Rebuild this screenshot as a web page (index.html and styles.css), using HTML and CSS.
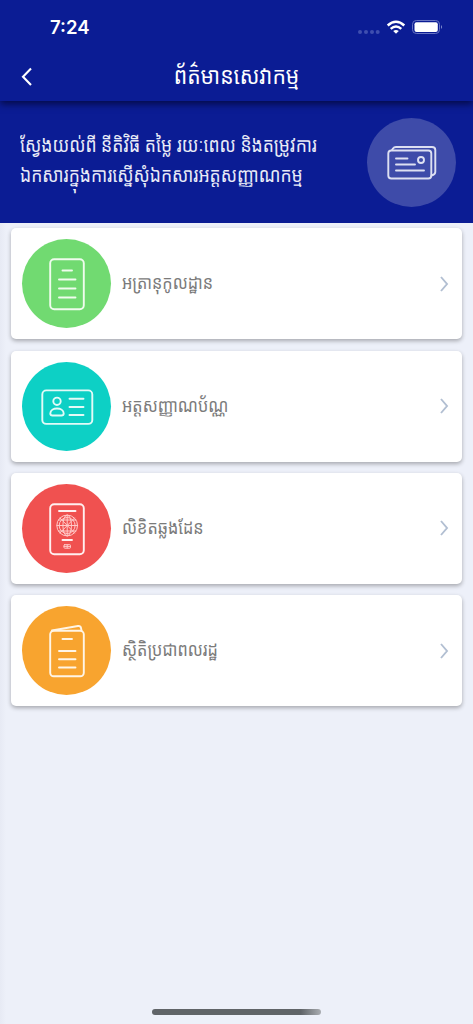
FILE: index.html
```html
<!DOCTYPE html>
<html lang="km">
<head>
<meta charset="utf-8">
<meta name="viewport" content="width=device-width, initial-scale=1">
<title>ព័ត៌មានសេវាកម្ម</title>
<link rel="stylesheet" href="styles.css">
</head>
<body>
<div class="screen">
  <header class="header">
    <div class="status">
      <span class="time">7:24</span>
      <svg class="status-icons" width="86" height="16" viewBox="0 0 86 16">
        <g fill="#3f4eaf"><circle cx="3" cy="12" r="2"/><circle cx="9" cy="12" r="2"/><circle cx="15" cy="12" r="2"/><circle cx="20.700" cy="12" r="2"/></g>
        <g fill="none" stroke="#fff" stroke-width="2.500"><path d="M30.700 5.500Q39 -2 47.300 5.500"/><path d="M33.700 8.900Q39 4.200 44.300 8.900"/></g>
        <path fill="#fff" d="M36.200 11Q39 8.800 41.800 11L39 13.700Z"/>
        <rect x="55.500" y=".5" width="27" height="13" rx="3.800" fill="none" stroke="#6874c3"/>
        <rect x="57.500" y="2.300" width="23.300" height="9.700" rx="2" fill="#fff"/>
        <path d="M84 5q2.200 2 0 4z" fill="#7e89cc"/>
      </svg>
    </div>
    <div class="nav">
      <svg class="back" width="14" height="20" viewBox="0 0 14 20"><path d="M11 1.500L3 9.700L11 18" fill="none" stroke="#fff" stroke-width="2.100"/></svg>
      <h1 class="title">ព័ត៌មានសេវាកម្ម</h1>
    </div>
  </header>
  <section class="banner">
    <p class="intro"><span class="line">ស្វែងយល់ពី នីតិវិធី តម្លៃ រយៈពេល និងតម្រូវការ</span><span class="line">ឯកសារក្នុងការស្នើសុំឯកសារអត្តសញ្ញាណកម្ម</span></p>
    <div class="circle pale">
      <svg width="89" height="89" viewBox="0 0 89 89" fill="none" stroke="#dde0f2" stroke-width="1.900" stroke-linecap="round">
        <rect x="21.300" y="32.500" width="43" height="28" rx="3"/>
        <path d="M25 32L26 30.500Q27 29 29 29H65Q68.300 29 68.300 32V54Q68.300 56.500 64.500 57.500"/>
        <path d="M29 40.500H40.500M29 46.500H48M29 52.500H57"/><circle cx="54" cy="42" r="3"/>
      </svg>
    </div>
  </section>
  <main class="list">
    <article class="card">
      <div class="circle green"><svg width="89" height="89" viewBox="0 0 89 89" fill="none" stroke="#effced" stroke-width="1.900" stroke-linecap="round"><rect x="28.200" y="20.300" width="33.600" height="50" rx="4"/><path d="M40.500 31.500H50M37 40.500H53.500M37 49.500H53.500M37 58.500H53.500"/></svg></div>
      <h2 class="label">អត្រានុកូលដ្ឋាន</h2>
      <svg class="chevron" width="10" height="18" viewBox="0 0 10 18"><path d="M2 2L8 9L2 16"/></svg>
    </article>
    <article class="card">
      <div class="circle teal"><svg width="89" height="89" viewBox="0 0 89 89" fill="none" stroke="#e3faf7" stroke-width="1.900" stroke-linecap="round"><rect x="20.300" y="28.400" width="50" height="33.500" rx="4"/><circle cx="35" cy="39.300" r="3.700"/><path d="M30.500 53.500Q28.300 53.500 28.300 51.500C28.300 44.800 41.700 44.800 41.700 51.500Q41.700 53.500 39.500 53.500ZM47.500 36.800H61.500M47.500 45H61.500M47.500 53H61.500"/></svg></div>
      <h2 class="label">អត្តសញ្ញាណប័ណ្ណ</h2>
      <svg class="chevron" width="10" height="18" viewBox="0 0 10 18"><path d="M2 2L8 9L2 16"/></svg>
    </article>
    <article class="card">
      <div class="circle red"><svg width="89" height="89" viewBox="0 0 89 89" fill="none" stroke="#fff0f0" stroke-width="1.900" stroke-linecap="round"><rect x="28.200" y="20.300" width="33.600" height="50" rx="4"/><path d="M37 27H53.500M40.500 56H50"/><g stroke="#ffc9c8" stroke-width="1"><circle cx="45.200" cy="41.500" r="10.400"/><circle cx="45.200" cy="41.500" r="8"/><ellipse cx="45.200" cy="41.500" rx="4.300" ry="10.400"/><path d="M35 41.500H55.400M36.500 36H54M36.500 47H54M45.200 31V52M38 34L52.500 49M52.500 34L38 49"/><rect x="42" y="60.700" width="6.500" height="3.500" rx=".7"/><path d="M42 62.400H48.500M45.200 61V64"/></g></svg></div>
      <h2 class="label">លិខិតឆ្លងដែន</h2>
      <svg class="chevron" width="10" height="18" viewBox="0 0 10 18"><path d="M2 2L8 9L2 16"/></svg>
    </article>
    <article class="card">
      <div class="circle orange"><svg width="89" height="89" viewBox="0 0 89 89" fill="none" stroke="#fff5e6" stroke-width="1.900" stroke-linecap="round"><rect x="28.200" y="24.800" width="33.600" height="45.500" rx="3.500"/><path d="M30 24.500L56 20Q58.500 19.600 59 22L59.500 24.500M40.500 33H50M37 45H53.500M37 53.300H53.500M37 61.500H53.500"/></svg></div>
      <h2 class="label">ស្ថិតិប្រជាពលរដ្ឋ</h2>
      <svg class="chevron" width="10" height="18" viewBox="0 0 10 18"><path d="M2 2L8 9L2 16"/></svg>
    </article>
  </main>
  <footer class="home"><div class="home-bar"></div></footer>
</div>
</body>
</html>
```
FILE: styles.css
```css
* { box-sizing: border-box; }
body { margin: 0; font-family: "Noto Sans Khmer", "Khmer OS Battambang", "DejaVu Sans", sans-serif; }
.screen { height: 1024px; display: flex; flex-direction: column; overflow: hidden; background: linear-gradient(90deg, #e7eaf4, #edf0f9 6px); }
.header { position: relative; height: 101px; background: #0b1c94; color: #fff; box-shadow: 0 3px 7px rgba(0, 0, 30, .65); }
.status { height: 52px; padding: 20px 30px 0 50px; display: flex; justify-content: space-between; }
.time { font: 600 18.5px/15px Inter, sans-serif; }
.nav { height: 50px; padding-left: 20px; display: grid; grid-template-columns: 14px 1fr 34px; align-items: center; }
.title { margin: 0 0 5px; font-size: 21.2px; font-weight: 400; line-height: 32px; text-align: center; white-space: nowrap; transform: scaleY(1.1); }
.banner { height: 122px; padding: 17px 17px 0 20px; display: flex; justify-content: space-between; background: #0b1c94; color: #e9ebf7; }
.intro { margin: 11px 0 0; font-size: 17.55px; font-weight: 400; }
.line { display: block; line-height: 30px; white-space: nowrap; transform: scaleY(1.14); }
.circle { width: 89px; height: 89px; flex: none; border-radius: 50%; }
.circle svg { display: block; }
.pale { background: #3e4ba9; }
.green { background: #71da71; }
.teal { background: #0dd0c5; }
.red { background: #f05150; }
.orange { background: #f8a42f; }
.list { flex: 1; padding: 5.400px 11px 0; display: flex; flex-direction: column; gap: 11.300px; }
.card { height: 111px; flex: none; padding: 0 13px 0 11px; display: flex; align-items: center; border-radius: 5px; background: #fff; box-shadow: 0 2px 4px rgba(0, 0, 0, .3); }
.label { flex: 1; margin: 0 0 3px 11px; font-size: 16.25px; font-weight: 400; line-height: 28px; color: #7b7b7b; white-space: nowrap; transform: scaleY(1.14); }
.chevron { fill: none; stroke: #b2bfd2; stroke-width: 1.900; }
.home { height: 15px; display: flex; justify-content: center; }
.home-bar { width: 169px; height: 6px; border-radius: 3px; background: linear-gradient(90deg, #606468 88%, #aaadb2); }
```
